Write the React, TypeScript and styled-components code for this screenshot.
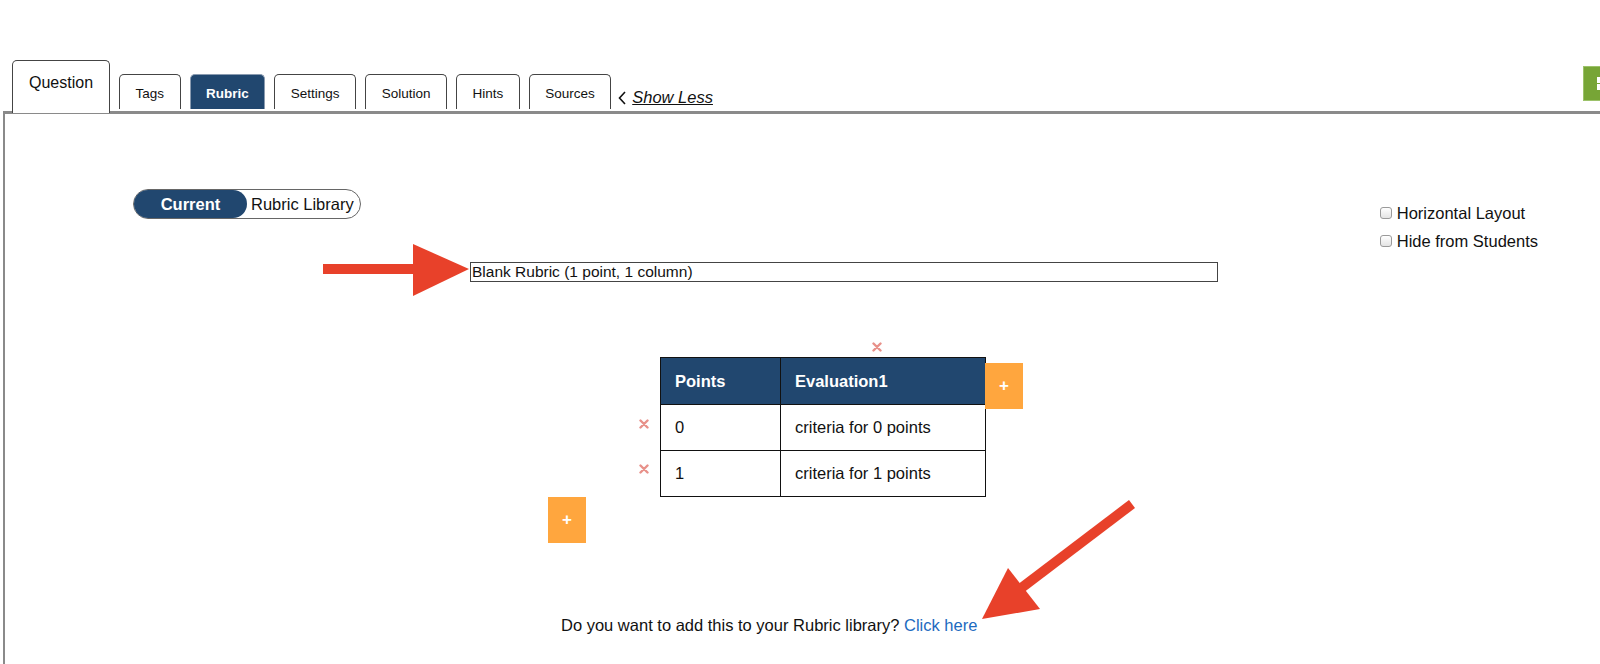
import React from 'react';
import styled, { createGlobalStyle } from 'styled-components';

const GlobalStyle = createGlobalStyle`
  html, body {
    margin: 0;
    padding: 0;
    background: #fff;
    overflow: hidden;
  }
  body {
    font-family: "Liberation Sans", Arial, Helvetica, sans-serif;
    color: #111;
  }
`;

const Page = styled.div`
  position: relative;
  width: 1600px;
  height: 664px;
  overflow: hidden;
`;

const TabBar = styled.div`
  display: flex;
  align-items: flex-end;
  gap: 9px;
  height: 111px;
  padding-left: 12px;
`;

const Tab = styled.div<{ $big?: boolean; $active?: boolean }>`
  display: flex;
  align-items: center;
  justify-content: center;
  box-sizing: border-box;
  height: ${(p) => (p.$big ? '53px' : '35px')};
  margin-bottom: ${(p) => (p.$big ? '-2px' : '2px')};
  padding: ${(p) => (p.$big ? '0 16px 8px' : '3px 15.5px 0')};
  border: 1px solid ${(p) => (p.$active ? '#8a9bb0' : '#444')};
  border-bottom: none;
  border-radius: 5px 5px 0 0;
  background: ${(p) => (p.$active ? '#21476f' : '#fff')};
  color: ${(p) => (p.$active ? '#fff' : '#111')};
  font-size: ${(p) => (p.$big ? '16px' : '13.5px')};
  font-weight: ${(p) => (p.$active ? 700 : 400)};
  position: relative;
  z-index: 1;
`;

const ShowLess = styled.a`
  display: flex;
  align-items: center;
  gap: 6px;
  margin-left: -2px;
  margin-bottom: 4px;
  color: #111;
  font-size: 16.5px;
  font-style: italic;
  cursor: pointer;

  span {
    text-decoration: underline;
  }
`;

const GreenButton = styled.div`
  align-self: flex-start;
  margin-top: 66px;
  margin-left: auto;
  margin-right: -23px;
  width: 40px;
  height: 35px;
  box-sizing: border-box;
  background: #77a536;
  border: 1px solid #9cc26a;
  display: flex;
  align-items: center;
  padding-left: 13px;
`;

const Panel = styled.div`
  position: relative;
  margin-left: 3px;
  min-height: 620px;
  border-top: 3px solid #8a8a8a;
  border-left: 2px solid #8a8a8a;
  display: flex;
  flex-direction: column;
`;

const TopRow = styled.div`
  display: flex;
  align-items: flex-start;
  justify-content: space-between;
`;

const Toggle = styled.div`
  margin-top: 75px;
  margin-left: 128px;
  display: flex;
  align-items: center;
  box-sizing: border-box;
  width: 228px;
  height: 30px;
  border: 1px solid #666;
  border-radius: 15px;
  font-size: 16.5px;
`;

const ToggleOption = styled.div<{ $on?: boolean }>`
  display: flex;
  align-items: center;
  justify-content: center;
  height: 100%;
  width: ${(p) => (p.$on ? '113px' : 'auto')};
  padding: ${(p) => (p.$on ? '0' : '0 0 0 4px')};
  border-radius: 15px;
  background: ${(p) => (p.$on ? '#21476f' : 'transparent')};
  color: ${(p) => (p.$on ? '#fff' : '#111')};
  font-weight: ${(p) => (p.$on ? 700 : 400)};
`;

const Options = styled.div`
  margin-top: 85px;
  margin-right: 62px;
  display: flex;
  flex-direction: column;
`;

const OptionRow = styled.label`
  display: flex;
  align-items: center;
  gap: 5px;
  height: 28px;
  font-size: 16.5px;
`;

const Check = styled.input`
  appearance: none;
  margin: 0;
  width: 12px;
  height: 12px;
  border: 1px solid #9a9a9a;
  border-radius: 3px;
  background: linear-gradient(#ffffff, #e4e4e4);
`;

const TitleInput = styled.input`
  margin-top: 7px;
  margin-left: 465px;
  width: 748px;
  height: 20px;
  box-sizing: border-box;
  border: 1px solid #444;
  padding: 0 1px;
  font-family: "Liberation Sans", Arial, sans-serif;
  font-size: 15.5px;
  color: #111;
  outline: none;
`;

const TableBlock = styled.div`
  margin-top: 58px;
  margin-left: 630px;
  display: flex;
  flex-direction: column;
`;

const ColumnControls = styled.div`
  height: 14px;
  margin-bottom: 3px;
  padding-left: 237px;
  display: flex;
  align-items: center;
`;

const TableRow = styled.div`
  display: flex;
  align-items: flex-start;
`;

const DeleteColumn = styled.div`
  width: 17px;
  margin-right: 8px;
  padding-top: 44px;
  display: flex;
  flex-direction: column;
`;

const DeleteCell = styled.div`
  height: 45px;
  display: flex;
  align-items: center;
  justify-content: center;
`;

const Rubric = styled.table`
  border-collapse: collapse;
  width: 326px;
  font-size: 16.5px;

  th, td {
    border: 1px solid #111;
    text-align: left;
    padding: 0 0 0 14px;
  }

  th {
    height: 46px;
    background: #21476f;
    color: #fff;
    font-weight: 700;
  }

  td {
    height: 45px;
  }
`;

const AddButton = styled.div<{ $offset?: number }>`
  width: 38px;
  height: 46px;
  margin-top: ${(p) => p.$offset ?? 0}px;
  margin-left: ${(p) => (p.$offset ? '-1px' : '543px')};
  background: #ffa63e;
  color: #fff;
  font-size: 17px;
  font-weight: 700;
  display: flex;
  align-items: center;
  justify-content: center;
`;

const LibraryPrompt = styled.p`
  margin: 72px 0 0 556px;
  font-size: 16.5px;
  line-height: 20px;

  a {
    color: #1d6ac0;
    text-decoration: none;
  }
`;

const Annotations = styled.svg`
  position: absolute;
  top: 0;
  left: 0;
  pointer-events: none;
`;

const DeleteMark = () => (
  <svg width="10" height="10" viewBox="0 0 10 10">
    <path d="M1.5 1.5 L8.5 8.5 M8.5 1.5 L1.5 8.5" stroke="#e8918a" strokeWidth="2.4" strokeLinecap="round" />
  </svg>
);

const rows = [
  { points: 0, text: 'criteria for 0 points' },
  { points: 1, text: 'criteria for 1 points' },
];

export default function App() {
  return (
    <Page>
      <GlobalStyle />
      <TabBar>
        <Tab $big>Question</Tab>
        <Tab>Tags</Tab>
        <Tab $active>Rubric</Tab>
        <Tab>Settings</Tab>
        <Tab>Solution</Tab>
        <Tab>Hints</Tab>
        <Tab>Sources</Tab>
        <ShowLess>
          <svg width="8" height="14" viewBox="0 0 8 14">
            <path d="M7 1 L1.5 7 L7 13" fill="none" stroke="#111" strokeWidth="1.6" />
          </svg>
          <span>Show Less</span>
        </ShowLess>
        <GreenButton>
          <svg width="16" height="14" viewBox="0 0 16 14">
            <rect x="0" y="0" width="7" height="6" fill="#fff" />
            <rect x="0" y="7" width="7" height="6" fill="#fff" />
            <rect x="8" y="0" width="7" height="6" fill="#fff" />
            <rect x="8" y="7" width="7" height="6" fill="#fff" />
          </svg>
        </GreenButton>
      </TabBar>

      <Panel>
        <TopRow>
          <Toggle>
            <ToggleOption $on>Current</ToggleOption>
            <ToggleOption>Rubric Library</ToggleOption>
          </Toggle>
          <Options>
            <OptionRow>
              <Check type="checkbox" />
              Horizontal Layout
            </OptionRow>
            <OptionRow>
              <Check type="checkbox" />
              Hide from Students
            </OptionRow>
          </Options>
        </TopRow>

        <TitleInput defaultValue="Blank Rubric (1 point, 1 column)" />

        <TableBlock>
          <ColumnControls>
            <DeleteMark />
          </ColumnControls>
          <TableRow>
            <DeleteColumn>
              {rows.map((r) => (
                <DeleteCell key={r.points}>
                  <DeleteMark />
                </DeleteCell>
              ))}
            </DeleteColumn>
            <Rubric>
              <colgroup>
                <col style={{ width: 120 }} />
                <col />
              </colgroup>
              <thead>
                <tr>
                  <th>Points</th>
                  <th>Evaluation1</th>
                </tr>
              </thead>
              <tbody>
                {rows.map((r) => (
                  <tr key={r.points}>
                    <td>{r.points}</td>
                    <td>{r.text}</td>
                  </tr>
                ))}
              </tbody>
            </Rubric>
            <AddButton $offset={6}>+</AddButton>
          </TableRow>
        </TableBlock>

        <AddButton>+</AddButton>

        <LibraryPrompt>
          Do you want to add this to your Rubric library? <a>Click here</a>
        </LibraryPrompt>
      </Panel>

      <Annotations width="1600" height="664" viewBox="0 0 1600 664">
        <rect x="323" y="264" width="92" height="10" fill="#e8412a" />
        <polygon points="413,244 469,269 413,296" fill="#e8412a" />
        <line x1="1132" y1="504" x2="1020" y2="589" stroke="#e8412a" strokeWidth="10" />
        <polygon points="982,619 1008,568 1040,609" fill="#e8412a" />
      </Annotations>
    </Page>
  );
}
